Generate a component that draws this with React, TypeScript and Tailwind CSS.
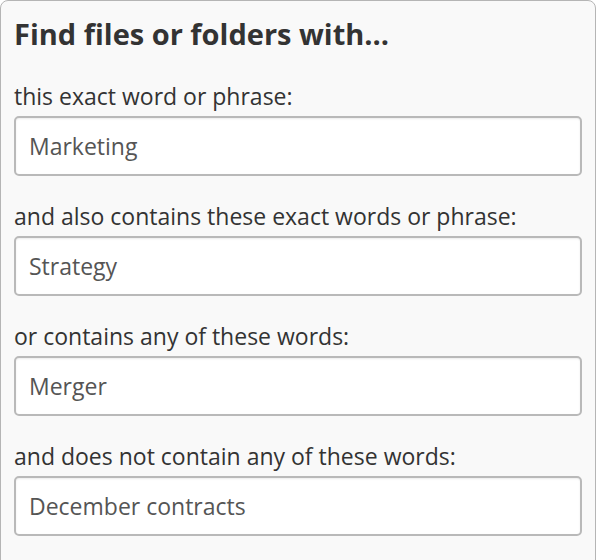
import React from "react";

const fields = [
  { label: "this exact word or phrase:", value: "Marketing" },
  { label: "and also contains these exact words or phrase:", value: "Strategy" },
  { label: "or contains any of these words:", value: "Merger" },
  { label: "and does not contain any of these words:", value: "December contracts" },
];

export default function App() {
  return (
    <div
      className="w-[596px] h-[560px] overflow-hidden bg-white"
      style={{ fontFamily: '"Open Sans", "Noto Sans", sans-serif' }}
    >
      <div className="h-[600px] rounded-t-[8px] border border-[#b5b5b5] bg-[#f9f9f9] px-[13px] pt-[15px]">
        <h2 className="text-[29px] leading-[36px] font-bold text-[#333333]">
          Find files or folders with...
        </h2>
        <div className="mt-[29px] flex flex-col gap-[25px]">
          {fields.map((f) => (
            <div key={f.label} className="flex flex-col gap-[5px]">
              <label className="text-[23px] leading-[30px] text-[#333333]">{f.label}</label>
              <input
                readOnly
                value={f.value}
                className="h-[60px] w-full rounded-[5px] border-2 border-[#b9b9b9] bg-white px-[13px] text-[23px] text-[#555555] shadow-[inset_0_1px_2px_rgba(0,0,0,0.08)] outline-none"
                style={{ fontFamily: '"Open Sans", "Noto Sans", sans-serif' }}
              />
            </div>
          ))}
        </div>
      </div>
    </div>
  );
}
